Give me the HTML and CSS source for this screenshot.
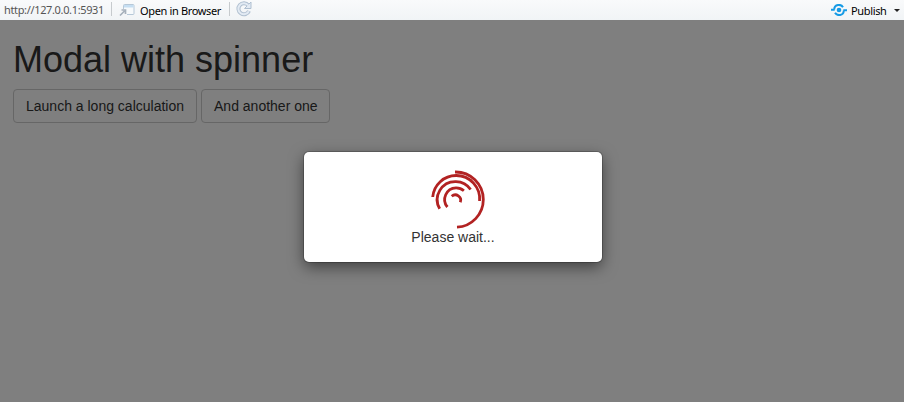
FILE: index.html
```html
<!DOCTYPE html>
<html lang="en">
<head>
<meta charset="utf-8">
<title>Modal with spinner</title>
<link rel="stylesheet" href="styles.css">
</head>
<body>
<header class="toolbar">
  <span class="url">http://127.0.0.1:5931</span>
  <span class="separator"></span>
  <button class="tool open">
    <svg width="16" height="14" viewBox="0 0 16 14"><path d="M4.500 6V2.500Q4.500 1.500 5.500 1.500H14Q15 1.500 15 2.500V10.500Q15 11.500 14 11.500H8" fill="#f7fafc" stroke="#b6c8d8"/><path d="M5 2h9.500v2.500H5z" fill="#c5def2"/><path d="M1 12.500 5.500 8M2.500 7H6.500V11" fill="none" stroke="#a6b0bb" stroke-width="1.700"/></svg>
    <span class="open-label">Open in Browser</span>
  </button>
  <span class="separator second"></span>
  <svg class="reload" width="16" height="16" viewBox="0 0 16 16"><path d="M12.200 4.300A5.500 5.500 0 1 0 13 10" fill="none" stroke="#afbfd0" stroke-width="4"/><path d="M8.500 7.500H15V1z" fill="#e2eaf3" stroke="#afbfd0"/><path d="M12.200 4.300A5.500 5.500 0 1 0 12.800 10.200" fill="none" stroke="#e2eaf3" stroke-width="2"/></svg>
  <button class="tool publish">
    <svg width="16" height="12" viewBox="0 0 16 12"><circle cx="8" cy="6" r="2.300" fill="#159ae5"/><path d="M3.200 5.500C3.400 0 10 -.2 12 3.200M12.800 6.500C12.600 12 6 12.200 4 8.800M0 5.800H3.700M12.300 6.200H16" fill="none" stroke="#159ae5" stroke-width="2"/></svg>
    <span class="publish-label">Publish</span>
    <span class="caret"></span>
  </button>
</header>
<main class="page">
  <h1>Modal with spinner</h1>
  <div class="actions">
    <button class="btn">Launch a long calculation</button>
    <button class="btn">And another one</button>
  </div>
  <div class="backdrop">
    <div class="modal" role="dialog">
      <svg class="spinner" width="60" height="60" viewBox="0 0 60 60">
        <path d="M29 2A27.700 27.700 0 0 1 57.300 29.500A27.700 27.700 0 0 1 31 57.200"/>
        <path d="M6.700 27A23.500 23.500 0 0 1 30.200 5.500A23.500 23.500 0 0 1 53.600 31"/>
        <path d="M13.700 38.800A18.100 18.100 0 0 1 30 11.600A18.100 18.100 0 0 1 44.600 19.500"/>
        <path d="M21.400 37A11.700 11.700 0 0 1 30 17.800A11.700 11.700 0 0 1 37.900 20.700"/>
        <path d="M25.700 26.200A5.400 5.400 0 0 1 34.300 32.200"/>
      </svg>
      <div class="message">Please wait...</div>
    </div>
  </div>
</main>
</body>
</html>
```
FILE: styles.css
```css
* { box-sizing: border-box; }
body {
  margin: 0;
  height: 402px;
  display: flex;
  flex-direction: column;
  overflow: hidden;
  font: 14px/20px "Liberation Sans", Arial, sans-serif;
  color: #333;
}
button { font: inherit; color: inherit; background: none; border: 0; padding: 0; }
svg { display: block; flex: none; }
.toolbar {
  height: 20px;
  flex: none;
  display: flex;
  align-items: center;
  padding: 0 4px;
  background: linear-gradient(#f9fafb, #f1f4f6);
  font: 11px/18px "Noto Sans", "Open Sans", sans-serif;
  color: #000;
}
.url { width: 107px; color: #555; font-size: 11px; letter-spacing: -0.35px; white-space: nowrap; }
.separator { width: 1px; height: 14px; margin-bottom: 2px; background: #c7cbce; }
.tool { display: flex; align-items: center; white-space: nowrap; }
.open { margin-left: 7px; }
.open-label { width: 84px; margin: 2px 0 0 5px; text-align: left; letter-spacing: -0.35px; }
.second { margin-left: 5px; }
.reload { margin: 0 0 2px 6px; }
.publish { margin-left: auto; }
.publish-label { width: 38px; margin: 2px 0 0 5px; text-align: left; letter-spacing: -0.35px; }
.publish svg { position: relative; left: 1px; }
.caret { margin-left: 5px; border: 3px solid transparent; border-top-color: #222; border-bottom: 0; }
.page {
  flex: 1;
  position: relative;
  padding: 20px 13px;
  background: #fff;
}
h1 { margin: 0 0 9px; font-size: 36px; line-height: 40px; font-weight: 400; }
.actions { display: flex; gap: 4px; }
.btn {
  height: 34px;
  padding: 0 12px;
  border: 1px solid #ccc;
  border-radius: 4px;
}
.btn:last-child { padding-right: 11px; }
.backdrop {
  position: absolute;
  inset: 0;
  display: flex;
  align-items: flex-start;
  justify-content: center;
  padding: 132px 0 0 2px;
  background: rgba(0, 0, 0, .5);
}
.modal {
  width: 298px;
  height: 110px;
  padding-top: 18px;
  background: #fff;
  border-radius: 5px;
  box-shadow: 0 0 0 1px rgba(0, 0, 0, .2), 0 5px 15px rgba(0, 0, 0, .5);
  text-align: center;
}
.spinner { margin: 0 auto -3px 122px; fill: none; stroke: #b22222; stroke-width: 2.8; }
```
